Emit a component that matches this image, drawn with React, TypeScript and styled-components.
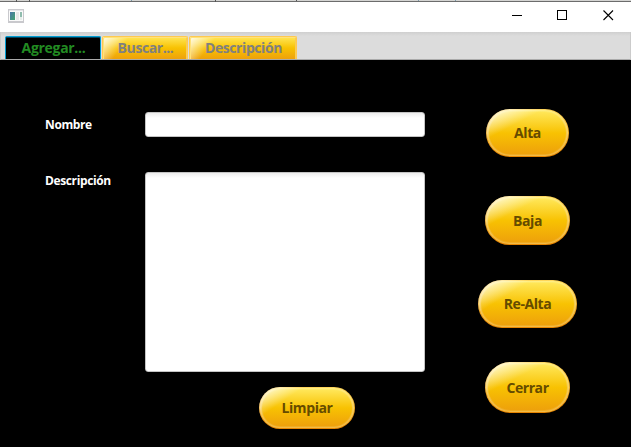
import React from "react";
import styled, { createGlobalStyle } from "styled-components";

const GlobalStyle = createGlobalStyle`
  *, *::before, *::after { box-sizing: border-box; }
  body { margin: 0; background: #000; overflow: hidden; }
`;

const Window = styled.div`
  display: flex;
  flex-direction: column;
  width: 631px;
  height: 447px;
  background: #000;
  font-family: "Open Sans", "Noto Sans", sans-serif;
  font-weight: 700;
`;

const TopEdge = styled.svg`
  display: block;
  flex: none;
`;

const TitleBar = styled.header`
  display: flex;
  flex: none;
  align-items: center;
  justify-content: space-between;
  height: 30px;
  padding: 0 17px 0 8px;
  background: #fff;
`;

const AppIcon = styled.svg`
  display: block;
  margin-bottom: 3px;
`;

const Controls = styled.div`
  display: flex;
  gap: 35px;
  margin-bottom: 3px;
  svg { display: block; }
`;

const TabStrip = styled.nav`
  display: flex;
  flex: none;
  align-items: flex-end;
  gap: 1px;
  height: 28px;
  padding-left: 4px;
  background: linear-gradient(#cfcfcf, #dcdcdc 4px);
  border: 1px solid #cbcbcb;
  border-top: 0;
  border-bottom-color: #aaa;
`;

const Tab = styled.button<{ $width: number; $active?: boolean }>`
  width: ${(p) => p.$width}px;
  height: 23px;
  padding: 0 0 1px 1px;
  border: 1px solid ${(p) => (p.$active ? "#039ed3" : "#ffc94e")};
  border-bottom: 0;
  border-radius: 2px 2px 0 0;
  box-shadow: ${(p) => (p.$active ? "inset 0 1px #00445e" : "inset 1px 1px #ffe27a, inset -1px 0 #f9cb55")};
  background: ${(p) =>
    p.$active
      ? "#000"
      : "linear-gradient(127deg, rgba(255,255,255,.9), rgba(255,255,255,0) 21px), linear-gradient(#ffe657, #f8c202 50%, #eea10b)"};
  color: ${(p) => (p.$active ? "#228b22" : "#808080")};
  font: inherit;
  font-size: 14px;
  line-height: 20px;
  letter-spacing: ${(p) => (p.$active ? -0.3 : -0.42)}px;
  white-space: nowrap;
`;

const Content = styled.main`
  display: flex;
  flex: 1;
  padding: 49px 0 0 45px;
`;

const Form = styled.section`
  display: grid;
  grid-template-columns: 100px 280px;
  grid-template-rows: 25px 200px 42px;
  row-gap: 35px;
  padding-top: 3px;
  align-content: start;
`;

const Label = styled.label<{ $top: number }>`
  padding-top: ${(p) => p.$top}px;
  color: #fff;
  font-size: 12px;
  line-height: 17px;
  letter-spacing: -0.38px;
`;

const fieldLook = `
  display: block;
  width: 280px;
  margin: 0;
  padding: 4px 7px;
  border: 1px solid #c4c4c4;
  border-radius: 3px;
  outline: 0;
  resize: none;
  background: linear-gradient(#ededed, #fff 5px);
`;

const Field = styled.input`
  ${fieldLook}
  height: 25px;
`;

const Area = styled.textarea`
  ${fieldLook}
  height: 200px;
`;

const FormActions = styled.div`
  grid-column: 2;
  margin-top: -20px;
  padding-left: 114px;
`;

const Actions = styled.aside`
  display: flex;
  flex-direction: column;
  align-items: center;
  width: 99px;
  margin-left: 53px;
`;

const Pill = styled.button<{ $w: number; $h: number; $gap?: number }>`
  position: relative;
  display: flex;
  flex: none;
  width: ${(p) => p.$w}px;
  height: ${(p) => p.$h}px;
  margin: ${(p) => p.$gap ?? 0}px 0 0;
  padding: 1px;
  border: 1px solid transparent;
  border-radius: 30px;
  background:
    linear-gradient(#ffea6a, #efaa22) content-box,
    linear-gradient(#ffef84, #f2ba44) padding-box,
    linear-gradient(#ffd65b, #e68400) border-box;
  color: #654b00;
  font: inherit;
  font-size: 14px;
  letter-spacing: -0.42px;

  &::after {
    content: "";
    position: absolute;
    inset: -1px;
    border-radius: 30px;
    background: linear-gradient(
      ${(p) => 90 + (Math.atan2(p.$h * 0.5, p.$w * 0.15) * 180) / Math.PI}deg,
      rgba(255, 255, 255, 0.9),
      rgba(255, 255, 255, 0) ${(p) => Math.hypot(p.$w * 0.15, p.$h * 0.5)}px
    );
  }
`;

const Face = styled.span`
  display: flex;
  flex: 1;
  align-items: center;
  justify-content: center;
  align-self: stretch;
  margin: 1px;
  padding-bottom: 1px;
  border-radius: 30px;
  background: linear-gradient(#ffe657, #f8c202 50%, #eea10b);
`;

export default function App() {
  return (
    <>
      <GlobalStyle />
      <Window>
        <TopEdge width="631" height="2" shapeRendering="crispEdges">
          <rect width="631" height="1" fill="#d4d4d2" />
          <rect y="1" width="631" height="1" fill="#6c6c6c" />
          <path d="M16.5 0v2M29.5 0v2M215.5 0v2M296.5 0v1" stroke="#555" />
          <path d="M131.5 0v1M418.5 0v1M455.5 0v1" stroke="#7b9bad" />
        </TopEdge>
        <TitleBar>
          <AppIcon width="16" height="14" viewBox="0 0 16 14" shapeRendering="crispEdges">
            <defs>
              <linearGradient id="pane" x2="1" y2="1">
                <stop stopColor="#4a76a8" />
                <stop offset="1" stopColor="#43a36f" />
              </linearGradient>
            </defs>
            <rect width="16" height="14" fill="#c9c9cd" />
            <rect x="1" y="1" width="14" height="1" fill="#e4e4e8" />
            <rect x="1" y="2" width="14" height="10" fill="#fafafa" />
            <rect x="2" y="3" width="5" height="8" fill="url(#pane)" />
            <rect x="8" y="3" width="3" height="8" fill="#e8e8e8" />
            <rect x="12" y="3" width="2" height="5" fill="#8fbcae" />
            <rect x="12" y="8" width="2" height="3" fill="#e5eeea" />
          </AppIcon>
          <Controls>
            <svg width="10" height="11">
              <path d="M0 5.5h10" stroke="#000" shapeRendering="crispEdges" />
            </svg>
            <svg width="11" height="11">
              <path d="M.5 .5h9v9h-9z" fill="none" stroke="#000" shapeRendering="crispEdges" />
            </svg>
            <svg width="11" height="11">
              <path d="M.5 .5l9.5 9.5M10 .5L.5 10" stroke="#000" strokeWidth="1.1" />
            </svg>
          </Controls>
        </TitleBar>
        <TabStrip>
          <Tab $width={96} $active>Agregar...</Tab>
          <Tab $width={86}>Buscar...</Tab>
          <Tab $width={108}>Descripción</Tab>
        </TabStrip>
        <Content>
          <Form>
            <Label htmlFor="nombre" $top={4}>Nombre</Label>
            <Field id="nombre" />
            <Label htmlFor="descripcion" $top={0}>Descripción</Label>
            <Area id="descripcion" />
            <FormActions>
              <Pill $w={96} $h={42}><Face>Limpiar</Face></Pill>
            </FormActions>
          </Form>
          <Actions>
            <Pill $w={83} $h={48}><Face>Alta</Face></Pill>
            <Pill $w={85} $h={49} $gap={39}><Face>Baja</Face></Pill>
            <Pill $w={99} $h={48} $gap={35}><Face>Re-Alta</Face></Pill>
            <Pill $w={85} $h={51} $gap={34}><Face>Cerrar</Face></Pill>
          </Actions>
        </Content>
      </Window>
    </>
  );
}
